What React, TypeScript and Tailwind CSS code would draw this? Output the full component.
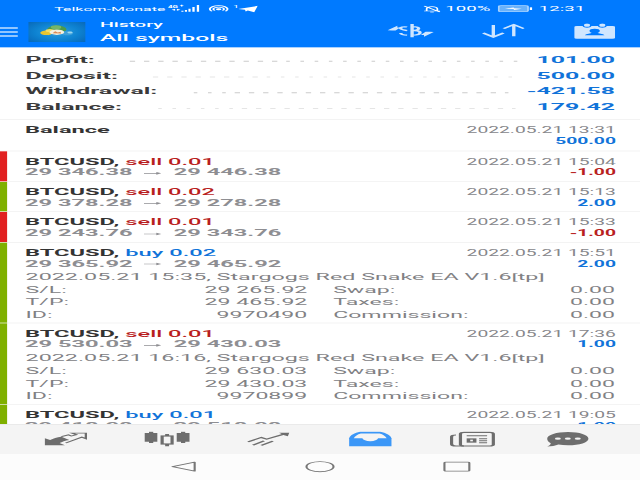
import type { ReactNode } from "react"

type Deal = {
  side: "sell" | "buy"
  volume: string
  open: string
  close: string
  time: string
  profit: string
  details?: {
    comment: string
    sl: string
    tp: string
    id: string
  }
}

const summary = [
  { label: "Profit:", value: "101.00", dots: 28 },
  { label: "Deposit:", value: "500.00", dots: 26 },
  { label: "Withdrawal:", value: "-421.58", dots: 23 },
  { label: "Balance:", value: "179.42", dots: 26 },
]

const deals: Deal[] = [
  { side: "sell", volume: "0.01", open: "29 346.38", close: "29 446.38", time: "2022.05.21 15:04", profit: "-1.00" },
  { side: "sell", volume: "0.02", open: "29 378.28", close: "29 278.28", time: "2022.05.21 15:13", profit: "2.00" },
  { side: "sell", volume: "0.01", open: "29 243.76", close: "29 343.76", time: "2022.05.21 15:33", profit: "-1.00" },
  {
    side: "buy",
    volume: "0.02",
    open: "29 365.92",
    close: "29 465.92",
    time: "2022.05.21 15:51",
    profit: "2.00",
    details: {
      comment: "2022.05.21 15:35, Stargogs Red Snake EA V1.6[tp]",
      sl: "29 265.92",
      tp: "29 465.92",
      id: "9970490",
    },
  },
  {
    side: "sell",
    volume: "0.01",
    open: "29 530.03",
    close: "29 430.03",
    time: "2022.05.21 17:36",
    profit: "1.00",
    details: {
      comment: "2022.05.21 16:16, Stargogs Red Snake EA V1.6[tp]",
      sl: "29 630.03",
      tp: "29 430.03",
      id: "9970899",
    },
  },
  { side: "buy", volume: "0.01", open: "29 418.08", close: "29 518.08", time: "2022.05.21 19:05", profit: "1.00" },
]

const StatusBar = () => (
  <div className="flex h-[24px] items-center pl-[30.5px] pr-[30.5px] pt-[2px] text-white">
    <span className="w-[62.5px] text-[9px] leading-[14px] whitespace-nowrap">Telkom-Monate</span>
    <svg className="h-[14px] w-[20px]" viewBox="0 0 20 14" fill="currentColor">
      <text x="1.5" y="5.5" fontSize="4.5" fontWeight="700">4G</text>
      <path d="M8.200 2h2v.8h-2zM8.800 1.200h.8v2.400h-.8z" />
      <path d="M3.500 8.500l2-1.500v3zM8.500 8.500l-2-1.500v3z" />
      <path d="M9 10h1.200v1.500H9zM11 9h1.200v2.500H11zM13 7.200h1.200v4.300H13zM15.200 4.600h1.300v6.900h-1.300zM17.700 1.500H19v10h-1.300z" />
    </svg>
    <svg className="ml-[4px] h-[12px] w-[12px]" viewBox="0 0 12 12" fill="none" stroke="currentColor" strokeWidth="1.1">
      <path d="M2.200 9.800a5 5 0 1 1 7.600 0M3.900 8.800a3 3 0 1 1 4.200 0" />
      <circle cx="6" cy="7" r="1" fill="currentColor" />
    </svg>
    <span className="ml-[2px] mb-[7px] w-[4px] text-[6px] leading-[7px]">1</span>
    <svg className="ml-[-1px] h-[11px] w-[11px]" viewBox="0 0 11 11" fill="currentColor">
      <path d="M0 5.400L11 .8 9 10.200 5.400 7.600 4.200 9.200 3.800 6.600z" />
    </svg>
    <div className="flex-1" />
    <svg className="h-[11px] w-[10px]" viewBox="0 0 10 11" fill="none" stroke="currentColor" strokeWidth="1">
      <path d="M2 8.300V5a3 3 0 0 1 6 0v3.300M.5 8.500h9M.6 1l8.800 9M4 10.200h2" />
    </svg>
    <span className="ml-[3px] w-[28px] text-[10.5px] leading-[14px]">100%</span>
    <svg className="ml-[1px] h-[12px] w-[20px]" viewBox="0 0 20 12">
      <rect x=".5" y="1.500" width="16.500" height="9" rx="1.500" fill="#69b2fb" stroke="#a9d3ff" />
      <rect x="18" y="4" width="1.300" height="4" fill="#fff" />
      <path d="M4 6l5-1.800v1.200L13.500 6 9 8V6.600z" fill="#fff" />
    </svg>
    <span className="ml-[3.5px] w-[26.5px] text-[10.5px] leading-[14px]">12:31</span>
  </div>
)

const Toolbar = () => (
  <div className="flex h-[46px] items-start text-white">
    <div className="mt-[17px] flex w-[10.2px] flex-col gap-[4px]">
      <div className="h-[2px] bg-[#d9ecff]" />
      <div className="h-[2px] bg-[#d9ecff]" />
      <div className="h-[2px] bg-[#d9ecff]" />
    </div>
    <div className="ml-[6px] mt-[9px] h-[29.5px] w-[32px] bg-[radial-gradient(circle,#2b9fe0_0%,#0e83d2_55%,#0868b8_100%)]">
      <svg viewBox="0 0 32 30" className="h-full w-full">
        <circle cx="16" cy="11" r="5.500" fill="#4c9a49" />
        <circle cx="15.500" cy="8" r="3" fill="#76b56a" />
        <circle cx="10" cy="16.500" r="3.500" fill="#e9c62f" />
        <circle cx="12" cy="13" r="2.500" fill="#f4dd65" />
        <circle cx="22" cy="17" r="3.300" fill="#3c9fda" />
        <circle cx="23.500" cy="16" r="1.500" fill="#9bd6ef" />
        <path d="M8.500 18c2 4 13 4 15 0-2 3.500-12 4.500-15 0z" fill="#cfd58a" />
        <circle cx="16" cy="15.500" r="4.200" fill="#f4f0df" />
        <path d="M13.500 17l1.500-3 1.500 2 1.500-1 .5 2.500z" fill="#d98b58" />
      </svg>
    </div>
    <div className="ml-[8px] mt-[6px] font-medium">
      <div className="text-[11px] leading-[16px]">History</div>
      <div className="mt-[1px] text-[13.9px] leading-[18px]">All symbols</div>
    </div>
    <div className="flex-1" />
    <div className="mt-[11px] flex pr-[14.5px] text-[#cfe6ff]">
      <svg className="h-[24px] w-[27px]" viewBox="0 0 27 24" fill="none" stroke="currentColor" strokeWidth="1.900">
        <path d="M11 5.500C8.800 4.700 7.300 5.800 7.300 7.500c0 1.800 1.500 2.600 3.700 3.500M7.300 14.500c.4 2 1.700 3.200 3.700 3.300" />
        <path d="M13.800 1v20M13.800 5c2.600 0 3.700 1 3.700 2.800s-1.100 2.900-3.700 2.900c3 0 4.500 1.100 4.500 3.300 0 2.400-1.500 3.600-4.500 3.600" />
        <path d="M0 10.500L5.500 3.500v2.800h1.700L4.500 10.800H2.500zM26 13l-5.500 7v-2.600h-1.800l2.700-4.600h2.200z" fill="currentColor" stroke="none" />
      </svg>
      <svg className="ml-[26px] h-[24px] w-[24px]" viewBox="0 0 24 24" fill="none" stroke="currentColor" strokeWidth="1.900">
        <path d="M6.500 2.500v18M.8 14.500l5.700 6 5.700-6M18 19.500V2M12.300 8L18 2l5.700 6" />
      </svg>
      <svg className="ml-[28px] h-[24px] w-[23px]" viewBox="0 0 23 24">
        <path d="M1.500 4h3.200c.3 1.800 1.200 2.500 2.500 2.500S9.400 5.800 9.700 4h3.600c.3 1.800 1.200 2.500 2.500 2.500s2.200-.7 2.500-2.500h3.200A1.500 1.500 0 0 1 23 5.500v16a1.500 1.500 0 0 1-1.500 1.500h-20A1.500 1.500 0 0 1 0 21.500v-16A1.500 1.500 0 0 1 1.500 4z" fill="currentColor" />
        <ellipse cx="7.200" cy="2.800" rx="1.700" ry="2.400" fill="currentColor" />
        <ellipse cx="15.800" cy="2.800" rx="1.700" ry="2.400" fill="currentColor" />
        <path d="M11.500 8c2 0 2.900 1.200 2.900 3 0 1.400-.5 2.400-1.200 3 0 1.500 3.300 1.200 3.800 4H6c.5-2.800 3.800-2.500 3.800-4-.7-.6-1.200-1.600-1.200-3 0-1.800.9-3 2.900-3z" fill="#007aff" />
      </svg>
    </div>
  </div>
)

const Summary = () => (
  <div className="h-[109.5px] border-b-[1.5px] border-[#eeeeee] pl-[14.3px] pr-[14px] pt-[7.3px]">
    {summary.map((item) => (
      <div key={item.label} className="flex h-[23.5px] items-center text-[14px] font-bold">
        <span className="text-[#3a3a3a]">{item.label}</span>
        <div className="ml-[20px] mt-[5px] flex flex-1 gap-[5.7px]">
          {Array.from({ length: item.dots }, (_, i) => (
            <span key={i} className="h-[1.5px] w-[2.3px] shrink-0 bg-[#d8d8d8]" />
          ))}
        </div>
        <span className="text-[#1173d9]">{item.value}</span>
      </div>
    ))}
  </div>
)

const profitColor = (profit: string) => (profit.startsWith("-") ? "text-[#b91f1f]" : "text-[#1173d9]")

type RowProps = {
  bar?: string
  title: ReactNode
  subtitle?: ReactNode
  time: string
  profit: string
  className: string
  children?: ReactNode
}

const Row = ({ bar, title, subtitle, time, profit, className, children }: RowProps) => (
  <div className={`flex shrink-0 border-b-[1.5px] border-[#eeeeee] ${className}`}>
    <div className={`w-[4px] ${bar ?? ""}`} />
    <div className="flex-1 pl-[10.4px] pr-[14px] pt-[7px]">
      <div className="flex h-[32px] justify-between whitespace-nowrap">
        <div className="origin-top-left scale-x-[0.93] text-[14.3px] leading-[16px] font-bold">
          <div className="text-[#333333]">{title}</div>
          {subtitle}
        </div>
        <div className="origin-top-right scale-x-[0.88] text-right text-[12.3px] leading-[16px]">
          <div className="mt-[1px] text-[#86868a]">{time}</div>
          <div className={`font-bold ${profitColor(profit)}`}>{profit}</div>
        </div>
      </div>
      {children}
    </div>
  </div>
)

const DealRow = ({ deal }: { deal: Deal }) => (
  <Row
    className={deal.details ? "h-[121.7px]" : "h-[45.5px]"}
    bar={deal.profit.startsWith("-") ? "bg-[#e12020]" : "bg-[#7fb000]"}
    time={deal.time}
    profit={deal.profit}
    title={
      <>
        BTCUSD,{" "}
        <span className={`font-medium ${deal.side === "sell" ? "text-[#b91f1f]" : "text-[#1173d9]"}`}>
          {deal.side} {deal.volume}
        </span>
      </>
    }
    subtitle={
      <div className="flex items-center text-[#8e8e92]">
        <span className="w-[66px]">{deal.open}</span>
        <svg className="mr-[7.3px] ml-[5.7px] mt-[3px] h-[6px] w-[11px]" viewBox="0 0 11 6" fill="currentColor">
          <path d="M0 2.500h7.500V1L10.500 3l-3 2V3.500H0z" />
        </svg>
        <span>{deal.close}</span>
      </div>
    }
  >
    {deal.details && (
      <div className="text-[13px] text-[#818184]">
        <div className="mt-[4.8px] text-[13.1px] leading-[18.8px] whitespace-nowrap">{deal.details.comment}</div>
        <div className="grid grid-cols-[158.5px_1fr] gap-x-[14.5px] leading-[18.8px]">
          <Field label="S/L:" value={deal.details.sl} />
          <Field label="Swap:" value="0.00" />
          <Field label="T/P:" value={deal.details.tp} />
          <Field label="Taxes:" value="0.00" />
          <Field label="ID:" value={deal.details.id} />
          <Field label="Commission:" value="0.00" />
        </div>
      </div>
    )}
  </Row>
)

const Field = ({ label, value }: { label: string; value: string }) => (
  <div className="flex justify-between">
    <span>{label}</span>
    <span>{value}</span>
  </div>
)

const TabBar = () => (
  <div className="flex h-[45px] items-start border-t border-[#e6e6e6] bg-[#f4f4f4] pl-[24.5px] pt-[10px] text-[#6d6d6d]">
    <svg className="h-[24px] w-[24px]" viewBox="0 0 24 24">
      <path d="M.2 10.500l3 2.500C5 11 7 8.500 9.500 8l4.500 5c-2.500.5-4 3-5.500 4.500l3 3.500H.2z" fill="currentColor" />
      <path d="M9.500 8l4-2.700 1.600 1.700L18 5l-2.500-2.300h7.800V11L21 8.700 12 17.500" fill="none" stroke="currentColor" strokeWidth="1.300" />
    </svg>
    <svg className="ml-[32.5px] h-[26px] w-[26px]" viewBox="0 0 26 26" fill="currentColor">
      <path d="M2.800 .5h2.400v2H7.500v13H5.200v2H2.800v-2H.4v-13h2.400zM20.800 .5h2.400v2h2.400v13h-2.400v2h-2.400v-2h-2.400v-13h2.400z" />
      <path d="M11.900 4h2.200v3h-2.200zM11.900 19h2.200v3.500h-2.200z" />
      <rect x="10.200" y="7" width="5.600" height="12" fill="none" stroke="currentColor" strokeWidth="1.800" />
    </svg>
    <svg className="ml-[32px] h-[24px] w-[25px]" viewBox="0 0 25 24" fill="none" stroke="currentColor" strokeWidth="1.600">
      <path d="M.5 15.800L8 9.200l3 2.500L21 4M3.300 20.800l6.200-6.600M8 21l6.500-6.500" />
      <path d="M18 2h5.700l-.8 5.500-2-1.800-1.200-1.200z" fill="currentColor" stroke="none" />
    </svg>
    <svg className="ml-[32px] h-[24px] w-[25px]" viewBox="0 0 25 24">
      <path d="M6.500 .8h11.500c3 1.500 5.500 5 6.200 9.500v12H.4v-12C1 5.800 3.500 2.300 6.500.8z" fill="#3b97f7" />
      <path d="M7 3.200h10.500c2 1.300 3.300 3.800 4 7.300h-4.800c-.5 2.800-2 4.200-4.400 4.200s-4-1.400-4.500-4.200H3c.7-3.500 2-6 4-7.300z" fill="#f4f4f4" />
    </svg>
    <svg className="ml-[32px] h-[24px] w-[26px]" viewBox="0 0 26 24" fill="none" stroke="currentColor" strokeWidth="1.800">
      <rect x="6" y="1.500" width="18.500" height="20.500" rx="2" />
      <path d="M3.500 5.500C2 5.500 1 6.500 1 8v11c0 2 1 3 2.500 3H8" />
      <path d="M9.500 6.500H21M16.500 11H21M16.500 14H21M16.500 17H21" strokeWidth="1.400" />
      <rect x="10.500" y="11.500" width="3.500" height="4.500" strokeWidth="2" />
    </svg>
    <svg className="ml-[28px] h-[24px] w-[25px]" viewBox="0 0 25 24">
      <path d="M12.500 1C19 1 24 5.300 24 11s-5 9.800-11.500 9.800c-2 0-3.800-.4-5.400-1.100C5.500 21.500 3 22.500.8 22.700c1.400-1.700 2-3.200 2-5C1.500 15.800.8 13.500.8 11 .8 5.300 6 1 12.500 1z" fill="currentColor" />
      <circle cx="6.800" cy="11" r="1.700" fill="#f4f4f4" />
      <circle cx="12.400" cy="11" r="1.700" fill="#f4f4f4" />
      <circle cx="18" cy="11" r="1.700" fill="#f4f4f4" />
    </svg>
  </div>
)

const NavBar = () => (
  <div className="flex h-[39px] items-center justify-center bg-[#fcfcfc] pb-[1px] text-[#777777]">
    <svg className="h-[18px] w-[15px]" viewBox="0 0 15 18" fill="none" stroke="currentColor" strokeWidth="1.200">
      <path d="M1 9L13.500 2.200v13.600z" strokeLinejoin="round" />
    </svg>
    <svg className="ml-[60.5px] h-[18px] w-[18px]" viewBox="0 0 18 18" fill="none" stroke="currentColor" strokeWidth="1.200">
      <circle cx="9" cy="9" r="7.600" />
    </svg>
    <svg className="ml-[59.5px] h-[18px] w-[16px]" viewBox="0 0 16 18" fill="none" stroke="currentColor" strokeWidth="1.200">
      <rect x="1" y="2.300" width="14" height="13.400" rx=".8" />
    </svg>
  </div>
)

// Phone screen laid out at 360x720 and stretched to fill a 4:3 window.
export default function App() {
  return (
    <div className="h-[480px] w-[640px] overflow-hidden bg-white">
      <div className="flex h-[720px] w-[360px] origin-top-left scale-x-[1.77778] scale-y-[0.66667] flex-col bg-white font-[Roboto,sans-serif]">
        <div className="h-[70.5px] shrink-0 bg-[#007aff]">
          <StatusBar />
          <Toolbar />
        </div>
        <Summary />
        <div className="flex h-[456px] shrink-0 flex-col overflow-hidden">
          <Row className="h-[47px]" title="Balance" time="2022.05.21 13:31" profit="500.00" />
          {deals.map((deal) => (
            <DealRow key={deal.time} deal={deal} />
          ))}
        </div>
        <TabBar />
        <NavBar />
      </div>
    </div>
  )
}
